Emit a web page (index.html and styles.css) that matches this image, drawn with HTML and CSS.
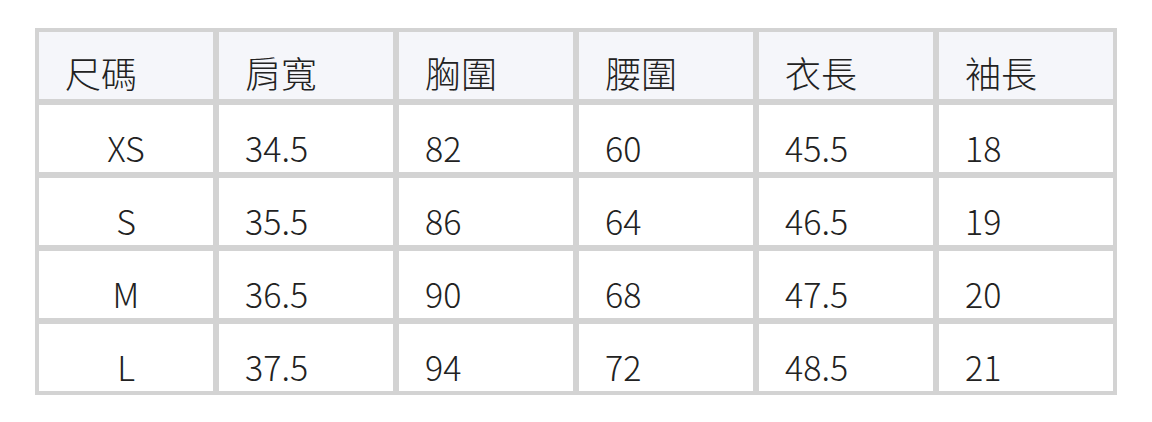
FILE: index.html
```html
<!DOCTYPE html>
<html lang="zh-Hant">
<head>
<meta charset="utf-8">
<link rel="stylesheet" href="styles.css">
</head>
<body>
<div class="size-table">
  <div class="cell head">尺碼</div>
  <div class="cell head">肩寬</div>
  <div class="cell head">胸圍</div>
  <div class="cell head">腰圍</div>
  <div class="cell head">衣長</div>
  <div class="cell head">袖長</div>

  <div class="cell size">XS</div>
  <div class="cell">34.5</div>
  <div class="cell">82</div>
  <div class="cell">60</div>
  <div class="cell">45.5</div>
  <div class="cell">18</div>

  <div class="cell size">S</div>
  <div class="cell">35.5</div>
  <div class="cell">86</div>
  <div class="cell">64</div>
  <div class="cell">46.5</div>
  <div class="cell">19</div>

  <div class="cell size">M</div>
  <div class="cell">36.5</div>
  <div class="cell">90</div>
  <div class="cell">68</div>
  <div class="cell">47.5</div>
  <div class="cell">20</div>

  <div class="cell size">L</div>
  <div class="cell">37.5</div>
  <div class="cell">94</div>
  <div class="cell">72</div>
  <div class="cell">48.5</div>
  <div class="cell">21</div>
</div>
</body>
</html>
```
FILE: styles.css
```css
html, body {
  margin: 0;
  padding: 0;
  background: #ffffff;
}
body {
  padding: 28px 0 0 35px;
  font-family: "Noto Sans CJK TC", "Noto Sans", sans-serif;
  font-weight: 300;
  color: #222222;
}
.size-table {
  width: 1082px;
  box-sizing: border-box;
  display: grid;
  grid-template-columns: repeat(6, 1fr);
  grid-auto-rows: 67px;
  gap: 6px;
  padding: 4px;
  background: #d3d3d3;
}
.cell {
  background: #ffffff;
  display: flex;
  align-items: flex-end;
  padding: 0 0 4px 26px;
  font-size: 34px;
  line-height: 40px;
  box-sizing: border-box;
}
.head {
  background: #f5f6fa;
  font-size: 36px;
  padding-bottom: 7px;
}
.size {
  justify-content: center;
  padding-left: 0;
}
```
